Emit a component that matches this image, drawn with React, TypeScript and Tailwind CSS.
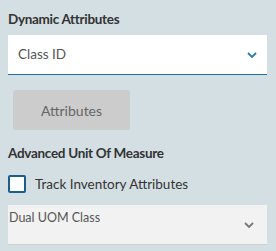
const Chevron = ({ color }: { color: string }) => (
  <svg width="10" height="6" viewBox="0 0 10 6" className="shrink-0">
    <path d="M1 1l4 4 4-4" fill="none" stroke={color} strokeWidth="1.8" />
  </svg>
);

export default function App() {
  return (
    <div
      className="h-[251px] w-[276px] bg-[#d4dfe3] pl-2 text-[#333333]"
      style={{ fontFamily: "Lato, 'Open Sans', sans-serif" }}
    >
      <div className="flex w-[259px] flex-col">
        {/* Dynamic attributes */}
        <div className="pt-[9px] text-[13.5px] font-bold leading-5 tracking-[-0.3px]">
          Dynamic Attributes
        </div>

        <div className="mt-[6px] flex h-10 items-center justify-between border-b-[1.5px] border-[#1e6ea7] bg-white pl-[10px] pr-[10px]">
          <span className="text-[13.5px] text-[#555555]">Class ID</span>
          <Chevron color="#2a7ab8" />
        </div>

        <button
          type="button"
          className="ml-[5px] mt-[15px] h-10 w-[117px] rounded-[3px] bg-[#cccccc] text-[14px] text-[#666666]"
        >
          Attributes
        </button>

        {/* Advanced UOM */}
        <div className="mt-[13px] text-[13.5px] font-bold leading-5 tracking-[-0.3px]">
          Advanced Unit Of Measure
        </div>

        <label className="mt-[11px] flex items-center gap-[9px]">
          <span className="h-[18px] w-[18px] rounded-[2px] border-2 border-[#1d5d8c] bg-white" />
          <span className="text-[13.5px] text-[#333333]">Track Inventory Attributes</span>
        </label>

        <div className="mt-[11px] flex h-10 items-start justify-between border-b border-[#d0d0d0] bg-[#f2f2f2] pl-[1px] pr-[13px]">
          <span className="pt-[5px] text-[12.5px] leading-4 text-[#555555]">Dual UOM Class</span>
          <span className="self-center">
            <Chevron color="#777777" />
          </span>
        </div>
      </div>
    </div>
  );
}
